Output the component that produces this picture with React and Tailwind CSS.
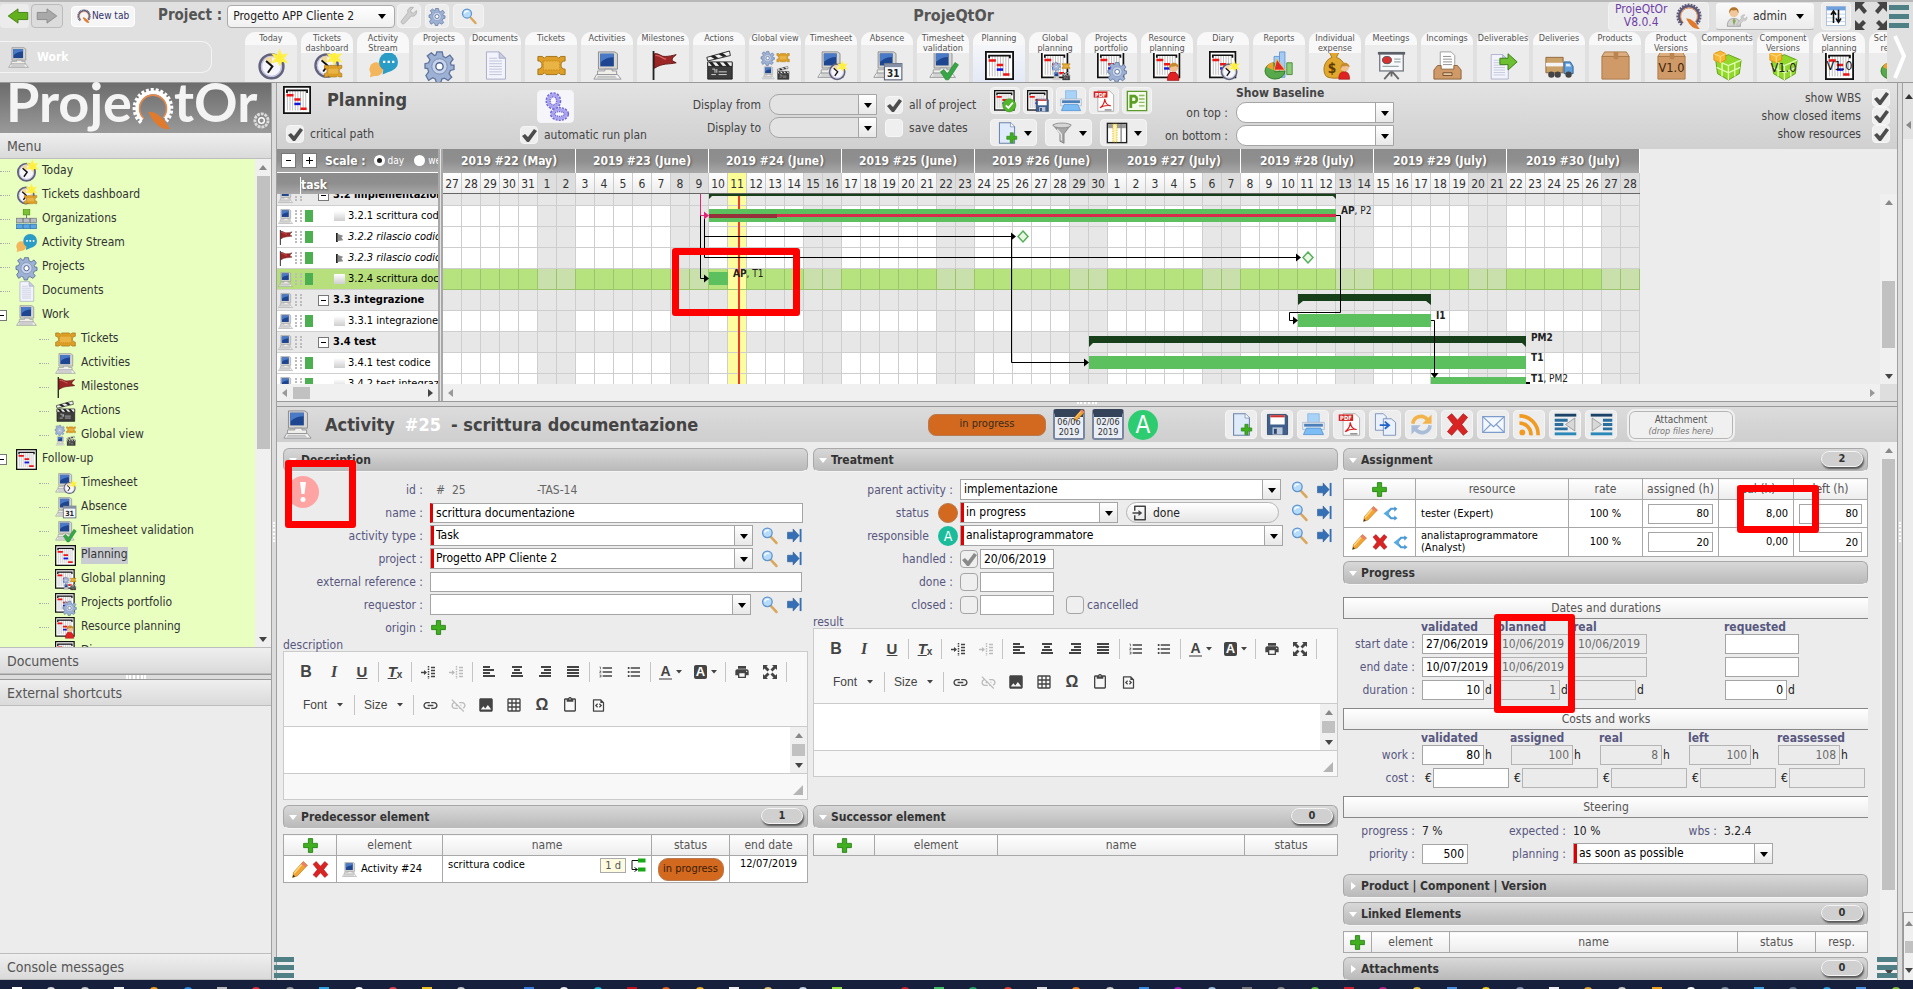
import React, { useId } from 'react';
import clsx from 'clsx';
import {
  MdFormatListBulleted,
  MdFormatListNumbered,
  MdGridOn,
  MdImage,
  MdLink,
  MdLinkOff,
  MdOutlineContentPaste,
  MdPrint,
} from 'react-icons/md';
import { RiFileCodeLine, RiLoginBoxLine } from 'react-icons/ri';

/* ---------- drawing parts, all on a 32 x 32 box ---------- */

const Part = ({ x = 0, y = 0, s = 1, children }) => (
  <g transform={`translate(${x} ${y}) scale(${s})`}>{children}</g>
);

const Pc = () => (
  <g>
    <path d="M6 1h18l3 2v17H6z" fill="#d8d6cf" stroke="#85878f" />
    <rect x="8" y="3" width="15" height="14" fill="#1d4590" />
    <path d="M8 3h15v4C17 7 12 9 8 13z" fill="#4a7ac6" />
    <path d="M13 20h8v2h5v4H5v-4h8z" fill="#efeee9" stroke="#94959a" />
    <path d="M4 26h23l4 5H1z" fill="#f6f6f4" stroke="#8f9197" />
    <path d="M5 28h20M4 29.500h22" stroke="#b5b5b5" />
  </g>
);

const Star = () => (
  <path
    d="M25 0l2 5 5-1-3 4 3 4-5-1-2 4-2-4-5 1 3-4-3-4 5 1z"
    fill="#ffee3c"
    stroke="#fff04a"
    strokeWidth="2"
  />
);

const Clock = ({ star = true }) => (
  <g>
    <circle cx="16" cy="17" r="13" fill="#f6f5fb" stroke="#62627c" strokeWidth="3" />
    <circle cx="16" cy="17" r="11" fill="none" stroke="#c3c3de" strokeWidth="1.500" />
    <path d="M16 17L9 9a10 10 0 0 1 8-3z" fill="#f3dc9a" />
    <path d="M10 11l7 6-5 7" fill="none" stroke="#111" strokeWidth="2.200" />
    {star && <Star />}
  </g>
);

const Ticket = () => (
  <g>
    <path
      d="M1 6h5l2 2 2-2h12l2 2 2-2h5v5a4 4 0 0 0 0 9v6h-5l-2-2-2 2H10l-2-2-2 2H1v-6a4 4 0 0 0 0-9z"
      fill="#dd9f27"
      stroke="#a06f14"
    />
    <path d="M7 11h18v10H7z" fill="#eab444" stroke="#c98a1a" strokeDasharray="2 1" />
  </g>
);

const Gear = () => (
  <g>
    <path
      d="M13 1h6l1 5 3 1.500 4.500-3L31 9l-3 4 .8 2.500H32v5l-4 1-1.500 3.500 3 4-4 3.500-4-2.500-3 1-1 4h-5l-1-4-3-1.500-4.500 3L1 27l3-4-1-3.500L0 19v-5l4-1 1.500-3.500-3-4L7 2l3.500 3L12 4.500z"
      fill="#9db1d4"
      stroke="#5d729c"
      strokeWidth="1.400"
    />
    <circle cx="16" cy="17" r="8.500" fill="#c6d3ea" stroke="#7488b0" />
    <circle cx="16" cy="17" r="4" fill="#fff" stroke="#4f648f" strokeWidth="1.500" />
  </g>
);

const Doc = () => (
  <g>
    <path d="M6 1h14l7 7v23H6z" fill="#f3f4fb" stroke="#a5a8c4" />
    <path d="M20 1v7h7z" fill="#c9cee2" stroke="#a5a8c4" />
    <path d="M9 8h9M9 11h14M9 14h14M9 17h14M9 20h14M9 23h14M9 26h14" stroke="#bcc1d8" />
  </g>
);

const Org = () => (
  <g>
    <path d="M16 9v5M5 21v-6h22v6M16 14v6" stroke="#777" fill="none" strokeWidth="1.500" />
    <rect x="11" y="1" width="10" height="8" fill="#7ac234" stroke="#4b8a15" />
    {[1, 11.5, 22].map((x) => (
      <g key={x}>
        <rect x={x} y="14" width="9" height="7" fill="#b9bcc4" stroke="#70737b" />
        <rect x={x} y="23" width="9" height="7" fill="#59a7e6" stroke="#2269a8" />
      </g>
    ))}
  </g>
);

const Bubbles = () => (
  <g>
    <circle cx="8" cy="20" r="7.500" fill="#f3b65c" />
    <path d="M2 24l-1 5 7-2z" fill="#f3b65c" />
    <circle cx="21.500" cy="12" r="10.500" fill="#2b9cc6" />
    <path d="M16 19l-1 7 9-4z" fill="#2b9cc6" />
    <path d="M15.500 12h2.500M20.500 12h2.500M25.500 12h2.500" stroke="#fff" strokeWidth="2.500" />
  </g>
);

const Flag = () => (
  <g>
    <path d="M5 0v32" stroke="#222" strokeWidth="2" />
    <path d="M6 3c5-1 8 4 12 3 4 0 8-1 12-2-4 3-5 5-4 7l4 2c-8 2-15 0-24 6z" fill="#9c2626" stroke="#5e0f0f" />
    <path d="M7 5c5-1 8 4 12 4" stroke="#d46060" strokeWidth="1.500" fill="none" />
  </g>
);

const Clap = () => (
  <g>
    <path d="M3 13h27v18H3z" fill="#3d3d3d" stroke="#1c1c1c" />
    <path d="M3 12h27v5H3z" fill="#f0f0f0" stroke="#222" />
    <path d="M4 12l4 5h4l-4-5zM12 12l4 5h4l-4-5zM20 12l4 5h4l-4-5z" fill="#222" />
    <path d="M2 7L27 0l1 5L3 11z" fill="#f0f0f0" stroke="#222" />
    <path d="M6 6l5 3 4-1-5-3.500zM15 3.500l5 3 4-1-5-3.500z" fill="#222" />
    <path d="M8 20h3v4M13 20v4M7 26h5M15 23h9M15 26h9" stroke="#ddd" fill="none" />
  </g>
);

const Global = () => (
  <g>
    <Part s={0.46}><Gear /></Part>
    <Part x={17} y={0} s={0.46}><Ticket /></Part>
    <Part x={1} y={17} s={0.44}><Pc /></Part>
    <Part x={17} y={17} s={0.46}><Clap /></Part>
  </g>
);

const Gantt = () => (
  <g>
    <rect x="1" y="1" width="30" height="30" fill="#fff" stroke="#111" strokeWidth="2" />
    <path d="M5 5v23M8 5v23M11 5v23M14 5v23M17 5v23M20 5v23M23 5v23M26 5v23" stroke="#b5b5b5" strokeWidth="1" />
    <path d="M4 5h24M4.500 4v4M27.500 4v4" stroke="#111" strokeWidth="2" />
    <path d="M4 10.500h8M13 15.500h7M20 26h7" stroke="#f01414" strokeWidth="2.800" />
    <path d="M13 20.500h7" stroke="#1414e0" strokeWidth="2.800" />
  </g>
);

const Person = () => (
  <g>
    <path d="M6 32c0-12 5-14 10-14s10 2 10 14z" fill="#e02222" stroke="#8c1010" />
    <circle cx="17" cy="10" r="7.500" fill="#f0c090" />
    <path d="M9 13c-2-14 16-15 17-3l-6-3c-4 2-6 1-7 1z" fill="#c48a2c" />
  </g>
);

const Check = () => (
  <path d="M1 17l6-4 6 8L26 1l6 4-17 26h-5z" fill="#35a845" stroke="#1f7a2d" />
);

const Cal31 = () => (
  <g>
    <rect x="1" y="3" width="30" height="28" fill="#f4f6fa" stroke="#606878" strokeWidth="2" />
    <rect x="1" y="3" width="30" height="6" fill="#8590a5" />
    <text x="16" y="26" textAnchor="middle" fontSize="17" fontWeight="700" fill="#222">31</text>
  </g>
);

const Chart = () => (
  <g>
    <path d="M10 6h6v24h-6zM16 1h6v28h-6z" fill="#a5cbf3" stroke="#6397d0" />
    <path d="M24 13h6v13h-6z" fill="#8ccc78" stroke="#4b8a35" />
    <path d="M10 13a11 9 0 1 0 12 9l-11 1z" fill="#58a84c" stroke="#2d7a1b" />
    <path d="M9 12v9L2 18c1-3 4-5 7-6z" fill="#f0a02c" />
    <path d="M13 9l9 12H10z" fill="#e02828" stroke="#f5c040" />
  </g>
);

const Money = () => (
  <g>
    <path d="M9 1h11l-3 6c9 3 12 13 9 20-2 4-19 4-21 0C1 20 4 10 12 7z" fill="#e0a82e" stroke="#a87410" />
    <text x="12" y="24" textAnchor="middle" fontSize="15" fontWeight="700" fill="#5c3b00">$</text>
    <Part x={16} y={12} s={0.6}><Person /></Part>
  </g>
);

const Board = () => (
  <g>
    <path d="M16 22l-8 9M16 22l8 9M16 20v8" stroke="#666" strokeWidth="2" />
    <rect x="3" y="2" width="26" height="20" fill="#f7f9fb" stroke="#787c84" strokeWidth="1.500" />
    <path d="M1 1h30v3H1z" fill="#5b5f67" />
    <ellipse cx="11" cy="10" rx="5" ry="4" fill="#d93030" stroke="#555" />
    <path d="M19 9h7M19 12h7M6 17h18" stroke="#9aa" strokeWidth="1.200" />
  </g>
);

const Inbox = () => (
  <g>
    <path d="M8 1h12l4 4v20H8z" fill="#fff" stroke="#999" />
    <path d="M11 6h9M11 9h10M11 12h10M11 15h10" stroke="#888" />
    <path d="M5 16h4v4h14v-4h4l4 5v10H1V21z" fill="#cf9a68" stroke="#8a5f36" />
    <path d="M11 24h10v3H11z" fill="#e6cba8" stroke="#704a28" />
  </g>
);

const Deliver = () => (
  <g>
    <Part x={-3} y={3} s={0.9}><Doc /></Part>
    <path d="M12 8h9V3l10 9-10 9v-6h-9z" fill="#6cc032" stroke="#35790f" />
  </g>
);

const Truck = () => (
  <g>
    <path d="M1 7h19v17H1z" fill="#c9a26a" stroke="#8d6239" />
    <path d="M1 13h19v4H1z" fill="#f4f4f4" />
    <path d="M21 12h7l3 5v8H21z" fill="#5f9ed6" stroke="#285f9a" />
    <path d="M23 14h4l2 3h-6z" fill="#dcecfb" />
    <circle cx="7" cy="26" r="3.500" fill="#444" />
    <circle cx="14" cy="26" r="3.500" fill="#444" />
    <circle cx="26" cy="26" r="3.500" fill="#444" />
  </g>
);

const Box = ({ label }) => (
  <g>
    <path d="M1 6h30v25H1z" fill="#cf9a68" stroke="#a87645" />
    <path d="M1 6l3-5h24l3 5z" fill="#dcae80" stroke="#a87645" />
    <path d="M14 1h5v8h-5z" fill="#b98450" />
    {label && <text x="16" y="23" textAnchor="middle" fontSize="14" fill="#402408">{label}</text>}
  </g>
);

const Cube = ({ label }) => (
  <g>
    <path d="M17 4l14 6-2 15-12 7L5 25 3 10z" fill="#92d82c" stroke="#5d9c14" />
    <path d="M3 10l14 6 14-6M17 16v16M10 13v15M24 13v15M4 18l13 6 13-6" fill="none" stroke="#e2ffb4" strokeWidth="1.500" />
    <path d="M1 3l7-3 6 3v7l-6 3-7-3z" fill="#f7b733" stroke="#d9940f" />
    <path d="M1 3l7 3 6-3M8 6v7" stroke="#ffe49c" fill="none" />
    {label && <text x="16" y="23" textAnchor="middle" fontSize="14" fill="#222">{label}</text>}
  </g>
);

const Disk = () => (
  <g>
    <path d="M2 2h26l2 2v26H2z" fill="#3f5f8c" stroke="#1e3557" />
    <path d="M6 3h20v13H6z" fill="#fff" />
    <path d="M6 3h20v3H6z" fill="#c33" />
    <path d="M9 20h14v10H9z" fill="#bcc8da" />
    <path d="M11 22h4v7h-4z" fill="#2a4670" />
  </g>
);

const Printer = () => (
  <g>
    <path d="M8 1h16v13H8z" fill="#a9d2f7" stroke="#7fb0de" />
    <path d="M1 13h30v10H1z" fill="#e8edf3" stroke="#a5b0c0" />
    <path d="M3 15h26v4H3z" fill="#4a7fba" />
    <path d="M6 21h20l4 9H2z" fill="#7dbdf5" stroke="#4a8acb" />
  </g>
);

const Pdf = () => (
  <g>
    <path d="M7 1h17l6 6v24H7z" fill="#fbfbfb" stroke="#999" />
    <rect x="1" y="2" width="20" height="9" fill="#d42020" />
    <text x="11" y="9.500" textAnchor="middle" fontSize="8" fontWeight="700" fill="#fff">PDF</text>
    <path d="M10 26c4-3 7-8 7-13 1 6 4 10 9 10-6-1-11 0-16 3z" fill="none" stroke="#d42020" strokeWidth="1.600" />
    <path d="M17 29h10" stroke="#888" strokeWidth="2" />
  </g>
);

const Project = () => (
  <g>
    <path d="M2 2h28v28H2z" fill="#f4faec" stroke="#5d9a2b" strokeWidth="2" />
    <path d="M19 8h8M19 13h8M19 18h8M19 23h8" stroke="#8dbb60" strokeWidth="2" />
    <path d="M7 26V9h6a5 5 0 0 1 0 9H7" fill="none" stroke="#5ba024" strokeWidth="4" />
  </g>
);

const Plus = () => (
  <path d="M12 3h8v9h9v8h-9v9h-8v-9H3v-8h9z" fill="#3fae1f" stroke="#1f7a0c" strokeWidth="1.500" />
);

const NewDoc = () => (
  <g>
    <path d="M5 1h16l6 6v24H5z" fill="#dfeafa" stroke="#6b84ab" strokeWidth="1.500" />
    <path d="M21 1v6h6" fill="#fff" stroke="#6b84ab" />
    <Part x={14} y={14} s={0.56}><Plus /></Part>
  </g>
);

const Funnel = () => (
  <g>
    <path d="M3 4h26L19 17v14l-6-3V17z" fill="#a8a8a8" stroke="#6e6e6e" />
    <ellipse cx="16" cy="5" rx="13" ry="3.500" fill="#d6d6d6" stroke="#777" />
    <path d="M9 11l6 7v9" stroke="#e8e8e8" strokeWidth="2" fill="none" />
  </g>
);

const Columns = () => (
  <g>
    <rect x="2" y="2" width="28" height="28" fill="#fff" stroke="#222" strokeWidth="2" />
    <path d="M3 3h26v6H3z" fill="#9b9b9b" />
    <rect x="10" y="3" width="6" height="26" fill="#fff3b0" stroke="#c9a400" strokeDasharray="2 1.500" />
    <path d="M22 3v26" stroke="#888" strokeWidth="2" />
  </g>
);

const Copy = () => (
  <g>
    <path d="M2 1h11l4 4v19H2z" fill="#eaf1fb" stroke="#5878a8" />
    <path d="M13 8h11l6 5v18H13z" fill="#eaf1fb" stroke="#5878a8" />
    <path d="M8 17h12m-5-5l6 5-6 5" stroke="#1f63c8" strokeWidth="2.500" fill="none" />
  </g>
);

const Refresh = () => (
  <g fill="none" strokeWidth="5">
    <path d="M4 15c1-10 13-14 20-6" stroke="#f2b44a" />
    <path d="M30 2v13H17z" fill="#f2b44a" />
    <path d="M28 17c-1 10-13 14-20 6" stroke="#a9bcd8" />
    <path d="M2 30V17h13z" fill="#a9bcd8" />
  </g>
);

const Cross = () => (
  <path d="M8 1l8 9 8-9 6 5-8 10 8 10-6 5-8-9-8 9-6-5 8-10L2 6z" fill="#d92424" stroke="#a81414" />
);

const Mail = () => (
  <g>
    <path d="M1 5h30v22H1z" fill="#f3f7fe" stroke="#7d9ccb" strokeWidth="1.500" />
    <path d="M1 5l15 14L31 5M1 27l11-11M31 27L20 16" fill="none" stroke="#7d9ccb" strokeWidth="1.500" />
  </g>
);

const Rss = () => (
  <g fill="none" stroke="#f09a22" strokeWidth="5">
    <path d="M2 4a26 26 0 0 1 26 27M2 14a16 16 0 0 1 16 17" />
    <circle cx="6" cy="27" r="4" fill="#f09a22" stroke="none" />
  </g>
);

const Indent = ({ right }) => (
  <g>
    <path d="M1 1h30v4H1z" fill="#1c4468" />
    <path d="M1 27h30v4H1z" fill="#2a88b8" />
    <path d={right ? 'M18 8h13v4H18zM18 14h13v4H18zM18 20h13v4H18z' : 'M1 8h18v4H1zM1 14h12v4H1zM1 20h18v4H1z'} fill="#2a6f9e" />
    <path d={right ? 'M3 7l13 9-13 9z' : 'M29 7l-13 9 13 9z'} fill="#d8d8d8" stroke="#8a8a8a" />
  </g>
);

const Pencil = () => (
  <g>
    <path d="M23 1l8 7L12 28l-9 3 2-10z" fill="#f4a530" stroke="#b06a0c" />
    <path d="M23 1l8 7-4 4-8-7z" fill="#e9806a" />
    <path d="M20 7L6 23" stroke="#ffd98c" strokeWidth="2.500" />
    <path d="M3 31l1-5 4 3z" fill="#333" />
  </g>
);

const Share = () => (
  <g fill="none" stroke="#4b9ad6" strokeWidth="4.500">
    <path d="M27 6H17L8 16l9 10h10" />
    <path d="M13 7L1 16l12 9z" fill="#5aaae4" stroke="none" />
    <path d="M24 1l7 5-7 6zM24 20l7 6-7 5z" fill="#4b9ad6" stroke="none" />
  </g>
);

const Lens = () => (
  <g>
    <path d="M19 19l10 11" stroke="#d9a85c" strokeWidth="5" strokeLinecap="round" />
    <circle cx="12" cy="11" r="9" fill="#b7dcfa" stroke="#5e94cf" strokeWidth="2.500" />
    <path d="M7 11c0-4 5-6 8-4" stroke="#fff" strokeWidth="2.500" fill="none" />
  </g>
);

const GoTo = () => (
  <g>
    <path d="M1 9h12V2l13 14-13 14v-7H1z" fill="#3570b6" stroke="#1d4c88" />
    <path d="M29 2v28" stroke="#3570b6" strokeWidth="4" />
  </g>
);

const Wrench = () => (
  <path d="M29 6l-5 5-4-1-1-4 5-5c-6-2-12 3-10 9L3 24c-3 4 2 8 5 5l12-13c6 2 11-4 9-10z" fill="#cfcfcf" stroke="#999" />
);

const Chain = () => (
  <g fill="none" stroke="#6f66d8">
    <ellipse cx="13" cy="9" rx="6" ry="7" strokeWidth="6" strokeDasharray="2 1" />
    <ellipse cx="20" cy="24" rx="8" ry="5" strokeWidth="6" strokeDasharray="2 1" />
    <ellipse cx="13" cy="9" rx="6" ry="7" stroke="#aaa5ec" strokeWidth="3" />
    <ellipse cx="20" cy="24" rx="8" ry="5" stroke="#aaa5ec" strokeWidth="3" />
  </g>
);

// toothed ring, open at the bottom where the tail leaves it
const QLogo = ({ light }) => (
  <g fill="none">
    <path d="M7 27A14 14 0 1 1 26 26" stroke={light ? '#fff' : '#5c5878'} strokeWidth="3" strokeDasharray="2.200 1.400" />
    <path d="M8 25A12 12 0 1 1 25 24" stroke={light ? '#fff' : '#5c5878'} strokeWidth="3" />
    <path d="M9 24A10.300 10.300 0 1 1 24 23" stroke="#e58a4c" strokeWidth="1.200" />
    <path d="M14 20c5 0 7 4 9 5s2 4 4 6c-5 0-9-3-13-11z" fill="#e07b2e" stroke="#e07b2e" strokeWidth="2" />
  </g>
);

const Admin = () => (
  <g>
    <path d="M2 31c0-9 4-12 10-12s10 3 10 12z" fill="#d5d5d5" stroke="#888" />
    <path d="M12 19l-2 3 2 8 3-8z" fill="#8a5" />
    <circle cx="12" cy="10" r="7" fill="#f0c79a" />
    <path d="M5 11C3-1 21-1 19 11l-3-5c-3 1-7 1-8 0z" fill="#b5742e" />
    <Part x={15} y={13} s={0.58}><Wrench /></Part>
  </g>
);

const Switch = () => (
  <g>
    <rect x="1" y="1" width="30" height="30" fill="#fff" stroke="#8aa6cc" />
    <path d="M1 1h30v6H1z" fill="#6fa1de" />
    <path d="M1 13h30M1 19h30M1 25h30" stroke="#9dbbe0" />
    <path d="M12 27V8m-4 6l4-6 4 6M20 6v20m-4-6l4 6 4-6" stroke="#111" strokeWidth="2.500" fill="none" />
  </g>
);

const Pred = () => (
  <g>
    <path d="M16 3h15v8H16zM16 21h15v8H16z" fill="#18a818" />
    <path d="M16 7H4v18h10m-5-4l6 4-6 4" fill="none" stroke="#111" strokeWidth="2" />
  </g>
);

const over = (Base, Top) => () => (
  <g>
    <Part s={0.94}><Base /></Part>
    <Part x={12} y={12} s={0.64}><Top /></Part>
  </g>
);

const OkDot = () => (
  <g>
    <circle cx="16" cy="16" r="15" fill="#52b52b" stroke="#2d7d10" />
    <path d="M8 16l6 6 10-12" stroke="#fff" strokeWidth="4" fill="none" />
  </g>
);

const VersionGantt = () => (
  <g>
    <Gantt />
    <text x="16" y="21" textAnchor="middle" fontSize="14" fill="#111">V1.0</text>
  </g>
);

const icons = {
  today: Clock,
  dashboard: over(Clock, Ticket),
  stream: Bubbles,
  org: Org,
  gear: Gear,
  doc: Doc,
  ticket: Ticket,
  pc: Pc,
  flag: Flag,
  clap: Clap,
  global: Global,
  timesheet: over(Pc, Clock),
  absence: over(Pc, Cal31),
  validation: over(Pc, Check),
  gantt: Gantt,
  globalPlanning: over(Gantt, Global),
  portfolio: over(Gantt, Gear),
  resource: over(Gantt, Person),
  diary: over(Gantt, Clock),
  chart: Chart,
  money: Money,
  board: Board,
  inbox: Inbox,
  deliver: Deliver,
  truck: Truck,
  box: Box,
  boxV: () => <Box label="V1.0" />,
  cube: Cube,
  cubeV: () => <Cube label="V1.0" />,
  versionGantt: VersionGantt,
  ganttOk: over(Gantt, OkDot),
  ganttSave: over(Gantt, Disk),
  disk: Disk,
  printer: Printer,
  pdf: Pdf,
  msProject: Project,
  newDoc: NewDoc,
  funnel: Funnel,
  columns: Columns,
  copy: Copy,
  refresh: Refresh,
  cross: Cross,
  mail: Mail,
  rss: Rss,
  outdent: Indent,
  indent: () => <Indent right />,
  pencil: Pencil,
  share: Share,
  plus: Plus,
  lens: Lens,
  goto: GoTo,
  wrench: Wrench,
  chain: Chain,
  q: QLogo,
  qLight: () => <QLogo light />,
  admin: Admin,
  switch: Switch,
  pred: Pred,
};

function Icon({ name, className = 'size-5' }) {
  const Drawing = icons[name];
  return (
    <svg viewBox="0 0 32 32" className={clsx('shrink-0 overflow-visible', className)} aria-hidden="true">
      <Drawing />
    </svg>
  );
}

function Tri({ dir = 'down', className = 'text-black' }) {
  const d = {
    down: 'M0 2h8L4 7z',
    up: 'M0 6h8L4 1z',
    left: 'M6 0v8L1 4z',
    right: 'M2 0v8l5-4z',
  }[dir];
  return (
    <svg viewBox="0 0 8 8" className={clsx('size-2 shrink-0', className)} aria-hidden="true">
      <path d={d} fill="currentColor" />
    </svg>
  );
}

/* ---------- form controls ---------- */

function Combo({ id, label, value = '', required, rounded, muted, className }) {
  return (
    <span
      className={clsx(
        'flex h-[21px] min-w-0 overflow-hidden border border-[#a5a5a5]',
        rounded && 'rounded-l-[10px]',
        muted ? 'bg-[#e3e3e3]' : 'bg-white',
        className
      )}
    >
      {required && <span className="w-[3px] shrink-0 bg-[#e00000]" />}
      <select
        id={id}
        aria-label={label}
        defaultValue={value}
        className={clsx('min-w-0 flex-1 appearance-none truncate bg-transparent text-xs leading-[19px] text-black outline-none', required ? 'px-0.5' : 'px-[3px]')}
      >
        <option>{value}</option>
      </select>
      <span className="flex w-[18px] shrink-0 items-center justify-center border-l border-[#a5a5a5] bg-linear-to-b from-white to-[#e8e8e8]">
        <Tri />
      </span>
    </span>
  );
}

function Tick({ id, label, checked, gray, bordered }) {
  return (
    <span className="relative flex size-[18px] shrink-0">
      <input
        id={id}
        type="checkbox"
        aria-label={label}
        defaultChecked={checked}
        className={clsx(
          'peer size-[18px] appearance-none rounded-[4px] border bg-[#efefef]',
          bordered ? 'border-[#a5a5a5]' : 'border-[#f6f6f6]'
        )}
      />
      <svg
        viewBox="0 0 18 18"
        className={clsx(
          'pointer-events-none absolute inset-0 hidden peer-checked:block',
          gray ? 'text-[#8a8a8a]' : 'text-[#4c4c4c]'
        )}
      >
        <path d="M2 10l3-2 3 3 6-8 3 2-8 11H7z" fill="currentColor" />
      </svg>
    </span>
  );
}

function Input({ id, label, value = '', readOnly, required, right, className }) {
  return (
    <input
      id={id}
      aria-label={label}
      defaultValue={value}
      readOnly={readOnly}
      className={clsx(
        'h-5 min-w-0 border text-xs outline-none',
        required ? 'border-l-[3px] border-l-[#e00000] px-[3px]' : 'px-[3px]',
        right && 'text-right',
        readOnly ? 'border-[#b4b4b4] bg-[#ebebeb] text-[#6b6b6b]' : 'border-[#a5a5a5] bg-white text-black',
        className
      )}
    />
  );
}

function ToolButton({ icon, title, wide, className = 'h-[27px] w-[30px]', size = 'size-[22px]' }) {
  return (
    <button
      type="button"
      title={title}
      className={clsx(
        'flex shrink-0 items-center justify-center rounded-[4px] border border-[#f4f4f4] bg-[#ededed]',
        className
      )}
    >
      <Icon name={icon} className={size} />
      {wide && <Tri className="ml-1.5 text-black" />}
    </button>
  );
}

/* ---------- top of the page ---------- */

const Bars = () => (
  <>
    <span className="h-[5px] w-5 bg-[#4f8085]" />
    <span className="h-[5px] w-5 bg-[#4f8085]" />
    <span className="h-[5px] w-5 bg-[#4f8085]" />
  </>
);

function TopBar() {
  const id = useId();
  return (
    <header className="flex h-8 shrink-0 items-center border-t-2 border-[#b8b8b8] bg-[#e0e0e0] pb-0.5">
      <button type="button" title="Back" className="flex h-6 w-[29px] items-center justify-center rounded-[4px] bg-[#ececec] pl-1.5">
        <svg viewBox="0 0 24 18" className="h-[16px] w-[22px]">
          <path d="M1 9L12 1v4h11v8H12v4z" fill="#62b01e" stroke="#3f7d0c" />
        </svg>
      </button>
      <button type="button" title="Forward" className="ml-0.5 flex h-6 w-8 items-center justify-center rounded-[4px] border border-[#bbb] bg-[#dcdcdc]">
        <svg viewBox="0 0 24 18" className="h-[16px] w-[22px]">
          <path d="M23 9L12 1v4H1v8h11v4z" fill="#a9a9a9" stroke="#888" />
        </svg>
      </button>
      <button type="button" className="ml-2 flex h-[21px] w-[64px] items-center justify-center gap-px rounded-[4px] border border-white bg-[#f6f6f6] text-[10px] whitespace-nowrap text-[#33336c]">
        <Icon name="q" className="size-[14px]" />
        New tab
      </button>
      <label htmlFor={id} className="ml-[23px] text-[15px] font-bold text-[#555]">
        Project :
      </label>
      <span className="ml-[5px] flex h-[23px] w-[168px] items-center rounded-[4px] border border-[#aaa] bg-linear-to-b from-white to-[#f0f0f0] pr-2">
        <select id={id} className="flex-1 appearance-none bg-transparent px-[5px] text-xs text-[#222] outline-none">
          <option>Progetto APP Cliente 2</option>
        </select>
        <Tri />
      </span>
      <ToolButton icon="wrench" title="Parameters" className="ml-0.5 h-6 w-6" size="size-[18px]" />
      <ToolButton icon="gear" title="Project settings" className="ml-1 h-6 w-6" size="size-[16px]" />
      <ToolButton icon="lens" title="Search" className="ml-1 h-6 w-[31px]" size="size-[16px]" />
      <h1 className="flex-1 pr-[187px] text-right text-base leading-5 font-bold text-[#555] min-[1500px]:pr-0 min-[1500px]:pl-[429px] min-[1500px]:text-left">
        ProjeQtOr
      </h1>
      <div className="flex h-[29px] w-[101px] items-center justify-between rounded-[4px] border border-[#f2f2f2] bg-[#ececec] px-1.5 text-center text-xs leading-[13px] text-[#6f3fa8]">
        <a href="#version">
          ProjeQtOr
          <br />
          V8.0.4
        </a>
        <Icon name="q" className="size-[26px]" />
      </div>
      <button type="button" className="ml-1.5 flex h-7 w-[100px] items-center rounded-[4px] border border-b-[#b5b5b5] border-[#e0e0e0] bg-linear-to-b from-[#fafafa] to-[#ececec] px-2.5 text-xs text-[#333]">
        <Icon name="admin" className="mr-1.5 size-[21px]" />
        admin
        <Tri className="ml-auto text-black" />
      </button>
      <ToolButton icon="switch" title="Switch layout" className="ml-1.5 h-[28px] w-[30px]" size="size-[20px]" />
      <button type="button" title="Full screen" className="ml-1 flex">
        <svg viewBox="0 0 32 28" className="h-7 w-8 text-[#444]">
          <path
            d="M0 0h10L7 3l5 6-3 3-5-6-4 4zM32 0H22l3 3-5 6 3 3 5-6 4 4zM0 28h10l-3-3 4-4-3-3-4 4-4-4zM32 28H22l3-3-4-4 3-3 4 4 4-4z"
            fill="currentColor"
          />
        </svg>
      </button>
      <button type="button" title="Menu" className="mr-1 ml-0.5 flex flex-col gap-1">
        <Bars />
      </button>
    </header>
  );
}

const shortcuts = [
  ['Today', 'today'],
  ['Tickets dashboard', 'dashboard'],
  ['Activity Stream', 'stream'],
  ['Projects', 'gear'],
  ['Documents', 'doc'],
  ['Tickets', 'ticket'],
  ['Activities', 'pc'],
  ['Milestones', 'flag'],
  ['Actions', 'clap'],
  ['Global view', 'global'],
  ['Timesheet', 'timesheet'],
  ['Absence', 'absence'],
  ['Timesheet validation', 'validation'],
  ['Planning', 'gantt'],
  ['Global planning', 'globalPlanning'],
  ['Projects portfolio', 'portfolio'],
  ['Resource planning', 'resource'],
  ['Diary', 'diary'],
  ['Reports', 'chart'],
  ['Individual expense', 'money'],
  ['Meetings', 'board'],
  ['Incomings', 'inbox'],
  ['Deliverables', 'deliver'],
  ['Deliveries', 'truck'],
  ['Products', 'box'],
  ['Product Versions', 'boxV'],
  ['Components', 'cube'],
  ['Component Versions', 'cubeV'],
  ['Versions planning', 'versionGantt'],
  ['Scheduled reports', 'chart'],
];

function ShortcutBar() {
  return (
    <nav className="flex h-[51px] shrink-0 border-b border-[#999] bg-[#e0e0e0]">
      <div className="w-[245px] shrink-0 pt-[9px]">
        <div className="flex h-8 w-[212px] items-center gap-2 rounded-r-[10px] border border-l-0 border-[#f4f4f4] pl-2 text-xs font-bold text-white">
          <Icon name="pc" className="size-[21px]" />
          Work
        </div>
      </div>
      <div className="flex min-w-0 flex-1 gap-1 overflow-hidden">
        {shortcuts.map(([label, icon]) => {
          const words = label === 'Global view' ? [label] : label.split(' ');
          return (
            <a
              key={label}
              href={`#${icon}`}
              className={clsx(
                'flex h-[50px] w-[52px] shrink-0 flex-col items-center justify-between rounded-t-[10px] pb-0.5 text-center text-[9px] leading-[10px] text-[#555]',
                label === 'Planning' ? 'bg-linear-to-b from-[#fafafa] to-[#e4e9f6]' : 'bg-[#ececec]'
              )}
            >
              <span
                className={clsx(
                  'relative z-10 w-full shrink-0 rounded-t-[10px] bg-[#f8f8f8] pt-px whitespace-nowrap',
                  words.length > 1 ? 'h-[21px]' : 'h-[13px]'
                )}
              >
                {words.map((w) => (
                  <span key={w} className="block">
                    {w}
                  </span>
                ))}
              </span>
              <Icon name={icon} className="-mt-3 size-[29px]" />
            </a>
          );
        })}
      </div>
      <button type="button" title="Scroll right" className="flex w-[26px] shrink-0 items-center justify-center">
        <svg viewBox="0 0 14 44" className="h-11 w-3.5">
          <path d="M2 1l9 20-9 22" stroke="#fff" strokeWidth="4" fill="none" />
        </svg>
      </button>
    </nav>
  );
}

/* ---------- left column ---------- */

const menu = [
  ['Today', 'today', 1],
  ['Tickets dashboard', 'dashboard', 1],
  ['Organizations', 'org', 1],
  ['Activity Stream', 'stream', 1],
  ['Projects', 'gear', 1],
  ['Documents', 'doc', 1],
  ['Work', 'pc', 1, true],
  ['Tickets', 'ticket', 2],
  ['Activities', 'pc', 2],
  ['Milestones', 'flag', 2],
  ['Actions', 'clap', 2],
  ['Global view', 'global', 2],
  ['Follow-up', 'gantt', 1, true],
  ['Timesheet', 'timesheet', 2],
  ['Absence', 'absence', 2],
  ['Timesheet validation', 'validation', 2],
  ['Planning', 'gantt', 2],
  ['Global planning', 'globalPlanning', 2],
  ['Projects portfolio', 'portfolio', 2],
  ['Resource planning', 'resource', 2],
  ['Diary', 'diary', 2],
];

const PaneTitle = ({ children }) => (
  <h2 className="flex h-[26px] shrink-0 items-center border-b border-[#bdbdbd] bg-linear-to-b from-[#efefef] to-[#dadada] pl-[7px] text-sm text-[#555]">
    {children}
  </h2>
);

function Minus({ plus, className }) {
  return (
    <button
      type="button"
      title={plus ? 'Expand' : 'Collapse'}
      className={clsx('flex size-[11px] shrink-0 items-center justify-center border border-[#777] bg-white', className)}
    >
      <svg viewBox="0 0 7 7" className="size-[7px]">
        <path d={plus ? 'M0 3.500h7M3.500 0v7' : 'M1 3.500h5'} stroke="#000" />
      </svg>
    </button>
  );
}

function SideBar() {
  return (
    <aside className="flex w-[271px] shrink-0 flex-col bg-[#ececec]">
      <div className="flex h-[50px] shrink-0 items-center bg-linear-to-b from-[#6c6c6c] to-[#9a9a9a] pl-[6px] font-['Lato'] text-[54px] leading-[50px] font-bold text-[#f4f4f4]">
        <span className="-mt-3">Proje</span>
        <Icon name="qLight" className="size-[42px]" />
        <span className="-mt-3">tOr</span>
        <svg viewBox="0 0 18 18" className="mt-6 -ml-1 size-[17px] shrink-0">
          <circle cx="9" cy="9" r="7" fill="none" stroke="#ddd" strokeWidth="3" strokeDasharray="3 1" />
          <circle cx="9" cy="9" r="3" fill="none" stroke="#fff" strokeWidth="1.500" />
        </svg>
      </div>
      <PaneTitle>Menu</PaneTitle>
      <div className="flex h-[489px] shrink-0 overflow-hidden border-b border-[#bdbdbd] bg-[#e8ffc0]">
        <ul className="min-w-0 flex-1">
          {menu.map(([label, icon, level, open], i) => (
            <li key={label + i} className={clsx('flex h-6 items-center text-xs text-[#333]', level === 2 && 'pl-[39px]')}>
              <span className="flex w-4 shrink-0 items-center">
                {open ? <Minus className="-ml-1" /> : <span className="w-2.5 border-t border-dotted border-[#aaa]" />}
              </span>
              <Icon name={icon} className="size-[21px]" />
              <a href={`#menu-${i}`} className={clsx('ml-[5px] pb-0.5 leading-[15px] whitespace-nowrap', label === 'Planning' && 'bg-[#c9cdd2]')}>
                {label}
              </a>
            </li>
          ))}
        </ul>
        <VScroll thumb="h-[273px]" className="w-4" />
      </div>
      <PaneTitle>Documents</PaneTitle>
      <div className="flex h-1.5 shrink-0 justify-center border-y border-[#999] bg-[#dcdcdc]">
        <span className="w-5 border-y-2 border-dotted border-white" />
      </div>
      <PaneTitle>External shortcuts</PaneTitle>
      <div className="flex-1 border-b border-[#bdbdbd]" />
      <PaneTitle>Console messages</PaneTitle>
    </aside>
  );
}

function VScroll({ lead, thumb, className = 'w-[17px]' }) {
  return (
    <div className={clsx('flex shrink-0 flex-col items-center bg-[#f0f0f0]', className)}>
      <span className="flex h-[17px] items-center">
        <Tri dir="up" className="text-[#888]" />
      </span>
      {lead && <span className={clsx('shrink-0', lead)} />}
      <span className={clsx('w-[13px] shrink-0 bg-[#c1c1c1]', thumb)} />
      <span className="mt-auto flex h-[17px] items-center">
        <Tri className="text-[#444]" />
      </span>
    </div>
  );
}

/* ---------- planning ---------- */

function Labelled({ label, checked, reverse, className }) {
  const id = useId();
  return (
    <span className={clsx('flex items-center text-xs text-[#444]', reverse ? 'flex-row-reverse gap-[11px]' : 'gap-1.5', className)}>
      <Tick id={id} checked={checked} />
      <label htmlFor={id} className="whitespace-nowrap">
        {label}
      </label>
    </span>
  );
}

function PlanningHeader() {
  const id = useId();
  return (
    <div className="flex h-[66px] shrink-0 bg-linear-to-b from-[#e2e2e2] to-[#d0d0d0] pl-1.5">
      <div className="flex w-[237px] shrink-0 flex-col justify-between pt-[3px] pb-1.5">
        <div className="flex items-center">
          <Icon name="gantt" className="size-[28px]" />
          <h2 className="ml-4 text-lg font-bold text-[#444]">Planning</h2>
        </div>
        <Labelled label="critical path" checked className="pl-[3px]" />
      </div>
      <div className="flex w-[143px] shrink-0 flex-col justify-between pt-[7px] pb-[5px]">
        <ToolButton icon="chain" title="Recalculate" className="ml-[17px] h-[33px] w-[37px] bg-[#f6f6fa]!" size="size-[28px]" />
        <Labelled label="automatic run plan" checked />
      </div>
      <div className="grid w-[327px] shrink-0 grid-cols-[98px_108px_1fr] content-start items-center gap-x-2 gap-y-0.5 pt-[11px]">
        <label htmlFor={`${id}a`} className="text-right text-xs text-[#444]">
          Display from
        </label>
        <Combo id={`${id}a`} rounded muted />
        <Labelled label="all of project" checked />
        <label htmlFor={`${id}b`} className="text-right text-xs text-[#444]">
          Display to
        </label>
        <Combo id={`${id}b`} rounded muted />
        <Labelled label="save dates" />
      </div>
      <div className="flex w-[172px] shrink-0 flex-col gap-[5px] pt-1">
        <div className="flex gap-[3px]">
          <ToolButton icon="ganttOk" title="Validate planning" />
          <ToolButton icon="ganttSave" title="Save baseline" />
          <ToolButton icon="printer" title="Print" />
          <ToolButton icon="pdf" title="Export to PDF" />
          <ToolButton icon="msProject" title="Export to project" />
        </div>
        <div className="flex gap-2">
          <ToolButton icon="newDoc" title="New" wide className="h-[27px] w-[47px]" />
          <ToolButton icon="funnel" title="Filter" wide className="h-[27px] w-[47px]" />
          <ToolButton icon="columns" title="Columns" wide className="h-[27px] w-[47px]" />
        </div>
      </div>
      <div className="grid shrink-0 grid-cols-[66px_158px] content-start items-center gap-x-2 gap-y-0.5 pt-0.5 text-right text-xs text-[#444]">
        <span className="col-start-2 h-[15px] text-left font-bold">Show Baseline</span>
        <label htmlFor={`${id}c`}>on top :</label>
        <Combo id={`${id}c`} rounded />
        <label htmlFor={`${id}d`}>on bottom :</label>
        <Combo id={`${id}d`} rounded />
      </div>
      <div className="ml-auto flex flex-col items-end pt-1.5 pr-[7px]">
        <Labelled label="show WBS" checked reverse />
        <Labelled label="show closed items" checked reverse />
        <Labelled label="show resources" checked reverse />
      </div>
    </div>
  );
}

const tasks = [
  { name: '3.2 implementazione', group: true, icon: 'pc' },
  { name: '3.2.1 scrittura codice', icon: 'pc' },
  { name: '3.2.2 rilascio codice', icon: 'flag', milestone: true },
  { name: '3.2.3 rilascio codice', icon: 'flag', milestone: true },
  { name: '3.2.4 scrittura documentazione', icon: 'pc', selected: true },
  { name: '3.3 integrazione', group: true, icon: 'pc' },
  { name: '3.3.1 integrazione', icon: 'pc' },
  { name: '3.4 test', group: true, icon: 'pc' },
  { name: '3.4.1 test codice', icon: 'pc' },
  { name: '3.4.2 test integrazione', icon: 'pc' },
];

const weeks = [
  '2019 #22 (May)',
  '2019 #23 (June)',
  '2019 #24 (June)',
  '2019 #25 (June)',
  '2019 #26 (June)',
  '2019 #27 (July)',
  '2019 #28 (July)',
  '2019 #29 (July)',
  '2019 #30 (July)',
];

// 27 may -> 28 july
const days = Array.from({ length: 63 }, (_, i) => new Date(2019, 4, 27 + i).getDate());
const isWeekend = (i) => i % 7 > 4;
const TODAY = 15;

const headGradient = 'bg-linear-to-b from-[#8c8c8c] via-[#8f8f8f] to-[#a8a8a8]';
const shadowText = '[text-shadow:1px_1px_2px_#555]';

function TaskList() {
  return (
    <div className="flex w-[161px] shrink-0 flex-col overflow-hidden">
      <div className={clsx('flex h-6 shrink-0 items-center border-b border-white pl-1 text-xs text-white', headGradient)}>
        <Minus className="size-[15px]!" />
        <Minus plus className="ml-1.5 size-[15px]!" />
        <span className={clsx('mr-2 ml-2 font-bold whitespace-nowrap', shadowText)}>Scale :</span>
        <label className="flex items-center gap-[3px] text-[10px]">
          <input type="radio" name="scale" defaultChecked className="size-[11px] appearance-none rounded-full border-[3px] border-white bg-[#222]" />
          day
        </label>
        <label className="ml-2.5 flex items-center gap-[3px] text-[10px]">
          <input type="radio" name="scale" className="size-[11px] appearance-none rounded-full bg-white" />
          week
        </label>
      </div>
      <div className={clsx('flex h-[21px] shrink-0 items-end text-xs leading-[17px] font-bold text-white', headGradient)}>
        <span className={clsx('ml-[23px] border-l border-white', shadowText)}>task</span>
      </div>
      <div className="h-[190px] shrink-0 overflow-hidden">
        <ul className="-mt-[9px]">
          {tasks.map((t) => (
            <li
              key={t.name}
              className={clsx(
                'flex h-[21px] items-center overflow-hidden border-b border-[#d0d0d0] pl-px text-[11px] whitespace-nowrap text-black',
                t.selected ? 'bg-[#b7e07c]' : t.group ? 'bg-[#e9e9e9]' : 'bg-white'
              )}
            >
              <Icon name={t.icon} className="size-[15px]" />
              <span className="ml-0.5 h-3 w-[7px] shrink-0 border-x-2 border-dotted border-[#bbb]" />
              {t.group ? (
                <Minus className="mr-1 ml-[16px]" />
              ) : (
                <>
                  <span className="ml-[3px] h-3 w-2 shrink-0 bg-[#4caf50]" />
                  {t.milestone ? (
                    <svg viewBox="0 0 10 10" className="mr-[3px] ml-[23px] size-[9px] shrink-0">
                      <path d="M1 0v10" stroke="#222" strokeWidth="2" />
                      <path d="M2 1l6 2-2 2 2 3-6 1z" fill="#888" />
                    </svg>
                  ) : (
                    <span className="mr-[3px] ml-[21px] h-2.5 w-[11px] shrink-0 bg-linear-to-b from-white to-[#cfcfcf]" />
                  )}
                </>
              )}
              <span className={clsx(t.group && 'font-bold', t.milestone && 'italic')}>{t.name}</span>
            </li>
          ))}
        </ul>
      </div>
      <div className="flex flex-1 items-center bg-[#f0f0f0] px-1">
        <Tri dir="left" className="text-[#999]" />
        <span className="ml-1 h-3 w-[17px] bg-[#c1c1c1]" />
        <Tri dir="right" className="ml-auto text-[#444]" />
      </div>
    </div>
  );
}

const barLabels = [
  { x: 898, y: 11, bold: 'AP', rest: ', P2' },
  { x: 290, y: 74, bold: 'AP', rest: ', T1' },
  { x: 993, y: 116, bold: 'I1' },
  { x: 1088, y: 138, bold: 'PM2' },
  { x: 1088, y: 158, bold: 'T1' },
  { x: 1088, y: 179, bold: 'T1', rest: ', PM2' },
];

function Bars1197() {
  return (
    <svg viewBox="0 0 1197 190" className="absolute top-0 left-0 h-[190px] w-[1197px]" aria-hidden="true">
      <path d="M296 0v190" stroke="#f23a28" strokeWidth="2" />
      {/* summaries */}
      <g fill="#173f19">
        <path d="M266 0h627v5l-3-3H269l-3 3z" />
        <path d="M855 100h133v11l-5-4H860l-5 4z" />
        <path d="M646 142h437v11l-4-4H650l-4 4z" />
      </g>
      {/* tasks */}
      <g fill="#5dc05f">
        <path d="M266 15h627v13H266z" />
        <path d="M266 78h19v13h-19z" />
        <path d="M855 120h133v13H855z" />
        <path d="M646 162h437v13H646z" />
        <path d="M988 183h95v10h-95z" />
      </g>
      <path d="M266 20h627v3H266z" fill="#d92c4c" />
      <path d="M266 20h68v4h-68z" fill="#98303c" />
      <g fill="#e9f6e4" stroke="#56b05a" strokeWidth="1.500">
        <path d="M580 37l5 5.500-5 5.500-5-5.500z" />
        <path d="M865 58l5 5.500-5 5.500-5-5.500z" />
      </g>
      {/* links */}
      <g fill="none" stroke="#000">
        <path d="M257.500 21v63.500h5M261.500 21v42.500h592M261.500 42.500h307M568.500 42v126.500h73M893 21.500h4.500v97h-51v8h5M988 126.500h3.500v55" />
      </g>
      <path d="M257.500 0v21.500h5" stroke="#e0257a" fill="none" />
      <path d="M261 17.500l5 4-5 4z" fill="#e0257a" />
      <path d="M261 80.500l5 4-5 4zM568 38.500l5 4-5 4zM853 59.500l5 4-5 4zM641 164.500l5 4-5 4zM850 122.500l5 4-5 4zM987.500 179h8l-4 5zM1083 188h4v2h-4z" />
    </svg>
  );
}

function GanttChart() {
  return (
    <div className="flex min-w-0 flex-1 flex-col overflow-hidden">
      <div className="flex h-[235px] shrink-0">
        <div className="min-w-0 flex-1 overflow-hidden">
          <div className="w-[1197px]">
            <div className="grid h-6 grid-cols-9">
              {weeks.map((w) => (
                <div key={w} className={clsx('flex items-center justify-center border-r border-white text-xs font-bold text-white', headGradient, shadowText)}>
                  {w}
                </div>
              ))}
            </div>
            <div className="flex h-[21px] border-b border-[#666]">
              {days.map((d, i) => (
                <div
                  key={i}
                  className={clsx(
                    'flex w-[19px] shrink-0 items-center justify-center border-r border-[#ccc] pt-px text-xs text-[#333]',
                    i === TODAY ? 'bg-[#fdfd96]' : isWeekend(i) ? 'bg-[#dedede]' : 'bg-linear-to-b from-white to-[#ececec]'
                  )}
                >
                  {d}
                </div>
              ))}
            </div>
            <div className="relative h-[190px] overflow-hidden">
              <div className="-mt-[9px]">
                {tasks.map((t) => (
                  <div key={t.name} className="flex h-[21px]">
                    {days.map((d, i) => (
                      <span
                        key={i}
                        className={clsx(
                          'w-[19px] shrink-0 border-r border-b',
                          t.selected ? 'border-[#9cc46c]' : 'border-[#cecece]',
                          i === TODAY
                            ? 'bg-[#fdfda0]'
                            : t.selected
                              ? isWeekend(i)
                                ? 'bg-[#c9dfac]'
                                : 'bg-[#b7e37e]'
                              : isWeekend(i) || t.group
                                ? 'bg-[#e7e7e7]'
                                : 'bg-white'
                        )}
                      />
                    ))}
                  </div>
                ))}
              </div>
              <Bars1197 />
              {barLabels.map((l) => (
                <span
                  key={l.y}
                  className="absolute text-[10px] leading-[12px] whitespace-nowrap text-[#222]"
                  style={{ left: l.x, top: l.y }}
                >
                  <b>{l.bold}</b>
                  {l.rest}
                </span>
              ))}
            </div>
          </div>
        </div>
        <div className="flex pt-[45px]">
          <VScroll lead="h-[70px]" thumb="h-[67px]" />
        </div>
      </div>
      <div className="flex flex-1 items-center bg-[#f0f0f0] pl-1">
        <Tri dir="left" className="text-[#999]" />
        <Tri dir="right" className="mr-1 ml-auto text-[#999]" />
        <span className="h-full w-[17px] bg-[#dedede]" />
      </div>
    </div>
  );
}

/* ---------- activity detail ---------- */

function DateIcon({ date, edit }) {
  return (
    <span className="relative flex h-[31px] w-8 flex-col items-center rounded-[3px] border-2 border-t-8 border-[#7886a0] border-t-[#34425a] bg-[#e9edf5] text-[9px] leading-[10px] text-[#333]">
      <span>{date}</span>
      <span>2019</span>
      {edit && <Icon name="pencil" className="absolute -top-2 -right-0.5 size-3" />}
    </span>
  );
}

const actions = [
  ['newDoc', 'New'],
  ['disk', 'Save'],
  ['printer', 'Print'],
  ['pdf', 'Export to PDF'],
  ['copy', 'Copy'],
  ['refresh', 'Refresh'],
  ['cross', 'Delete'],
  ['mail', 'Send mail'],
  ['rss', 'Subscribe'],
  ['outdent', 'Outdent'],
  ['indent', 'Indent'],
];

function ActivityHeader() {
  return (
    <div className="flex h-[35px] shrink-0 items-center bg-linear-to-b from-[#dcdcdc] to-[#cecece] pl-1.5">
      <Icon name="pc" className="size-[29px]" />
      <h2 className="ml-[13px] flex-1 text-lg font-bold whitespace-nowrap text-[#444]">
        Activity<span className="mx-[10px] text-white">#25</span>- scrittura documentazione
      </h2>
      <span className="flex h-[22px] w-[118px] items-center justify-center rounded-[8px] border border-[#b87a50] bg-[#d2691e] text-[11px] text-[#3a2a1c]">
        in progress
      </span>
      <span className="ml-[7px] flex gap-[7px]">
        <DateIcon date="06/06" edit />
        <DateIcon date="02/06" />
      </span>
      <span className="ml-1 flex size-[30px] items-center justify-center rounded-full bg-[#2ecc71] text-2xl text-white">A</span>
      <div className="ml-[67px] flex gap-1">
        {actions.map(([icon, title]) => (
          <ToolButton key={icon} icon={icon} title={title} className="h-[29px] w-8" size="size-[23px]" />
        ))}
      </div>
      <button type="button" className="mr-[164px] ml-3 h-7 w-[104px] rounded-[6px] border border-[#b5b5b5] bg-[#f0f0f0] text-center text-[10px] leading-[11px] text-[#555] outline-2 outline-[#f0f0f0]">
        Attachment
        <br />
        <span className="text-[9px] leading-[10px] italic text-[#777]">(drop files here)</span>
      </button>
    </div>
  );
}

function Section({ title, count, closed }) {
  return (
    <h3 className="flex h-6 items-center rounded-[6px] border border-[#a8a8a8] border-b-[#f4f4f4] bg-linear-to-b from-[#d8d8d8] to-[#b9b9b9] pr-1 pl-[5px] text-xs font-bold text-[#333]">
      <Tri dir={closed ? 'right' : 'down'} className="mr-1 text-white" />
      {title}
      {count !== undefined && (
        <span className="mb-0.5 ml-auto flex h-4 w-[42px] items-center justify-center rounded-full border border-[#f4f4f4] bg-[#d0d0d0] text-[11px] shadow-[1px_2px_2px_#555]">
          {count}
        </span>
      )}
    </h3>
  );
}

function Row({ label, htmlFor, mark, width = 'w-[140px]', children }) {
  return (
    <div className="flex h-[23px] items-center text-xs">
      <label htmlFor={htmlFor} className={clsx('mr-[7px] shrink-0 text-right whitespace-nowrap text-[#57577f]', width)}>
        {label}
        {!mark && ' :'}
      </label>
      {mark}
      {children}
    </div>
  );
}

const LinkIcons = () => (
  <span className="flex shrink-0 gap-[9px]">
    <button type="button" title="Search">
      <Icon name="lens" className="size-[17px]" />
    </button>
    <button type="button" title="Go to">
      <Icon name="goto" className="size-[15px]" />
    </button>
  </span>
);

function AlignIcon({ rows }) {
  return (
    <svg viewBox="0 0 12 12" className="size-3">
      {rows.map(([x, w], i) => (
        <rect key={i} x={x} y={i * 3} width={w} height="2" fill="#444" />
      ))}
    </svg>
  );
}

// dashed guide with an arrow on its left and short lines on its right
const IndentIcon = () => (
  <svg viewBox="0 0 15 13" className="h-[13px] w-[15px]" fill="none" stroke="currentColor">
    <path d="M7.500 0v13" strokeDasharray="1.500 1" strokeWidth="1.500" />
    <path d="M10 1.500h4M10 4.500h4M10 7.500h4M10 10.500h4M0 6.500h5" strokeWidth="1.500" />
    <path d="M3 4l3 2.500L3 9z" fill="currentColor" stroke="none" />
  </svg>
);

const MaximizeIcon = () => (
  <svg viewBox="0 0 16 16" className="size-4" fill="currentColor">
    <path d="M1 1h5L4.500 2.500l3 3-2 2-3-3L1 6zM15 1h-5l1.500 1.500-3 3 2 2 3-3L15 6zM1 15h5l-1.500-1.500 3-3-2-2-3 3L1 10zM15 15h-5l1.500-1.500-3-3 2-2 3 3L15 10z" />
  </svg>
);

const Sep = () => <span className="mx-[2px] h-5 w-px bg-[#c4c4c4]" />;

const Cell = ({ title, dim, wide, children }) => (
  <button
    type="button"
    title={title}
    className={clsx('flex h-[30px] items-center justify-center gap-1', wide ? 'w-[35px]' : 'w-7', dim ? 'text-[#bbb]' : 'text-[#444]')}
  >
    {children}
  </button>
);

const SmallTri = () => (
  <svg viewBox="0 0 6 4" className="h-1 w-1.5">
    <path d="M0 0h6L3 3.500z" fill="#444" />
  </svg>
);

function Editor({ label }) {
  return (
    <>
      <div className="flex h-3 items-center text-xs text-[#57577f]">{label}</div>
      <div className="h-[149px] border border-[#cbcbcb] bg-[#f8f8f8] font-['Liberation_Sans',sans-serif]">
        <div className="h-[74px] overflow-hidden pt-[5px] pl-2">
          <div className="flex items-center">
            <Cell title="Bold"><b className="text-base">B</b></Cell>
            <Cell title="Italic"><b className="font-['Liberation_Serif',serif] text-base italic">I</b></Cell>
            <Cell title="Underline"><b className="text-[15px] underline">U</b></Cell>
            <Sep />
            <Cell title="Remove format">
              <span className="flex items-end">
                <b className="text-[15px] leading-4 italic underline">T</b>
                <b className="text-[10px] leading-[10px]">x</b>
              </span>
            </Cell>
            <Sep />
            <Cell title="Indent"><IndentIcon /></Cell>
            <Cell title="Outdent" dim><IndentIcon /></Cell>
            <Sep />
            <Cell title="Left"><AlignIcon rows={[[0, 7], [0, 11], [0, 7], [0, 12]]} /></Cell>
            <Cell title="Center"><AlignIcon rows={[[1, 10], [3, 6], [1, 10], [0, 12]]} /></Cell>
            <Cell title="Right"><AlignIcon rows={[[2, 10], [5, 7], [2, 10], [0, 12]]} /></Cell>
            <Cell title="Justify"><AlignIcon rows={[[0, 12], [0, 12], [0, 12], [0, 12]]} /></Cell>
            <Sep />
            <Cell title="Numbered list"><MdFormatListNumbered size={16} /></Cell>
            <Cell title="Bulleted list"><MdFormatListBulleted size={16} /></Cell>
            <Sep />
            <Cell title="Text color" wide>
              <b className="border-b-2 border-[#999] px-px text-sm leading-[14px]">A</b>
              <SmallTri />
            </Cell>
            <Cell title="Background color" wide>
              <b className="rounded-[2px] bg-[#444] px-[2px] text-[13px] leading-[14px] text-white">A</b>
              <SmallTri />
            </Cell>
            <Sep />
            <Cell title="Print"><MdPrint size={16} /></Cell>
            <Cell title="Maximize"><MaximizeIcon /></Cell>
            <Sep />
          </div>
          <div className="mt-[3px] flex items-center text-xs text-[#444]">
            <button type="button" className="flex h-[30px] w-[60px] items-center gap-2.5 pl-[11px]">
              Font <SmallTri />
            </button>
            <Sep />
            <button type="button" className="flex h-[30px] w-[54px] items-center gap-2.5 pl-[7px]">
              Size <SmallTri />
            </button>
            <Sep />
            <Cell title="Link"><MdLink size={17} /></Cell>
            <Cell title="Unlink" dim><MdLinkOff size={17} /></Cell>
            <Cell title="Image"><MdImage size={18} /></Cell>
            <Cell title="Table"><MdGridOn size={16} /></Cell>
            <Cell title="Special character"><b className="text-base">Ω</b></Cell>
            <Cell title="Paste from Word"><MdOutlineContentPaste size={16} /></Cell>
            <Cell title="Source"><RiFileCodeLine size={15} /></Cell>
          </div>
        </div>
        <div className="flex h-12 border-y border-[#cbcbcb] bg-white">
          <textarea aria-label={label} className="min-w-0 flex-1 resize-none outline-none" />
          <VScroll thumb="h-3" />
        </div>
        <div className="flex h-[25px] items-end justify-end p-1">
          <svg viewBox="0 0 10 10" className="size-2.5">
            <path d="M10 0v10H0z" fill="#b5b5b5" />
          </svg>
        </div>
      </div>
    </>
  );
}

function Description() {
  const id = useId();
  return (
    <section>
      <Section title="Description" />
      <div className="relative pt-1.5">
        <svg viewBox="0 0 32 32" className="absolute top-1 left-1 size-8" aria-hidden="true">
          <circle cx="16" cy="16" r="16" fill="#ffa3a3" />
          <path d="M13 6h6l-1.500 12h-3z" fill="#fff" />
          <circle cx="16" cy="23.500" r="2.500" fill="#fff" />
        </svg>
        <Row label="id">
          <span className="w-[107px] px-1.5 text-[#666]"># &nbsp;25</span>
          <span className="text-[#666]">-TAS-14</span>
        </Row>
        <Row label="name" htmlFor={`${id}n`}>
          <Input id={`${id}n`} value="scrittura documentazione" required className="mr-[5px] flex-1" />
        </Row>
        <Row label="activity type" htmlFor={`${id}t`}>
          <Combo id={`${id}t`} value="Task" required className="mr-2 flex-1" />
          <LinkIcons />
          <span className="w-1.5" />
        </Row>
        <Row label="project" htmlFor={`${id}p`}>
          <Combo id={`${id}p`} value="Progetto APP Cliente 2" required className="mr-2 flex-1" />
          <LinkIcons />
          <span className="w-1.5" />
        </Row>
        <Row label="external reference" htmlFor={`${id}e`}>
          <Input id={`${id}e`} className="mr-1.5 flex-1" />
        </Row>
        <Row label="requestor" htmlFor={`${id}r`}>
          <Combo id={`${id}r`} className="mr-2.5 flex-1" />
          <LinkIcons />
          <span className="w-1.5" />
        </Row>
        <Row label="origin">
          <button type="button" title="Add origin">
            <Icon name="plus" className="size-[17px]" />
          </button>
        </Row>
        <Editor label="description" />
      </div>
    </section>
  );
}

function Treatment() {
  const id = useId();
  return (
    <section>
      <Section title="Treatment" />
      <div className="pt-1.5">
        <Row label="parent activity" htmlFor={`${id}p`}>
          <Combo id={`${id}p`} value="implementazione" className="mr-2.5 flex-1" />
          <LinkIcons />
          <span className="w-1.5" />
        </Row>
        <Row
          label="status"
          htmlFor={`${id}s`}
          width="w-[116px]"
          mark={<span className="mr-0.5 ml-0.5 size-5 shrink-0 rounded-full border border-[#b87a50] bg-[#d2691e]" />}
        >
          <Combo id={`${id}s`} value="in progress" required className="w-[158px]" />
          <button type="button" className="mr-3 ml-2 flex h-[21px] min-w-0 flex-1 items-center gap-1 rounded-full border border-[#b5b5b5] bg-linear-to-b from-white to-[#e6e6e6] pl-1 text-[#222]">
            <RiLoginBoxLine size={18} className="text-[#444]" />
            done
          </button>
          <LinkIcons />
          <span className="w-1.5" />
        </Row>
        <Row
          label="responsible"
          htmlFor={`${id}r`}
          width="w-[116px]"
          mark={<span className="mr-0.5 ml-0.5 flex size-5 shrink-0 items-center justify-center rounded-full bg-[#1abc9c] text-sm text-white">A</span>}
        >
          <Combo id={`${id}r`} value="analistaprogrammatore" required className="mr-2 flex-1" />
          <LinkIcons />
          <span className="w-1.5" />
        </Row>
        <Row label="handled" htmlFor={`${id}h`}>
          <Tick id={`${id}h`} checked gray bordered />
          <Input label="handled date" value="20/06/2019" className="ml-0.5 w-[74px]" />
        </Row>
        <Row label="done" htmlFor={`${id}d`}>
          <Tick id={`${id}d`} bordered />
          <Input label="done date" className="ml-0.5 w-[74px]" />
        </Row>
        <Row label="closed" htmlFor={`${id}c`}>
          <Tick id={`${id}c`} bordered />
          <Input label="closed date" className="mr-3 ml-0.5 w-[74px]" />
          <Tick id={`${id}x`} bordered />
          <label htmlFor={`${id}x`} className="ml-[3px] text-[#57577f]">
            cancelled
          </label>
        </Row>
        <Editor label="result" />
      </div>
    </section>
  );
}

const th = 'h-[21px] border border-[#a8a8a8] bg-linear-to-b from-white to-[#ececec] font-normal text-[#555]';
const td = 'border border-[#a8a8a8] bg-white text-[11px] leading-[14px] text-black';

const AddHead = () => (
  <th className={th}>
    <button type="button" title="Add" className="block w-full">
      <Icon name="plus" className="mx-auto size-[17px]" />
    </button>
  </th>
);

function Assignment() {
  const rows = [
    { name: ['tester (Expert)'], assigned: '80', real: '8,00', left: '80', height: 'h-7' },
    { name: ['analistaprogrammatore', '(Analyst)'], assigned: '20', real: '0,00', left: '20', height: 'h-[29px]', removable: true },
  ];
  return (
    <table className="mt-1.5 w-full table-fixed border-collapse text-xs">
      <colgroup>
        <col className="w-[72px]" />
        <col />
        <col className="w-[74px]" />
        <col className="w-[76px]" />
        <col className="w-[75px]" />
        <col className="w-[74px]" />
      </colgroup>
      <thead>
        <tr>
          <AddHead />
          <th className={th}>resource</th>
          <th className={th}>rate</th>
          <th className={th}>assigned (h)</th>
          <th className={th}>real (h)</th>
          <th className={th}>left (h)</th>
        </tr>
      </thead>
      <tbody>
        {rows.map((r) => (
          <tr key={r.left} className={r.height}>
            <td className={td}>
              <div className="flex items-center justify-center gap-[5px]">
                <Icon name="pencil" className="size-4" />
                {r.removable && <Icon name="cross" className="size-4" />}
                <Icon name="share" className="size-[15px]" />
              </div>
            </td>
            <td className={clsx(td, 'px-[5px]')}>
              {r.name.map((n) => (
                <div key={n} className="leading-[12px]">
                  {n}
                </div>
              ))}
            </td>
            <td className={clsx(td, 'text-center')}>100 %</td>
            <td className={clsx(td, 'px-[5px]')}>
              <Input label="assigned" value={r.assigned} right className="block w-full text-[11px]!" />
            </td>
            <td className={clsx(td, 'px-[5px] text-right')}>{r.real}</td>
            <td className={clsx(td, 'px-[5px]')}>
              <Input label="left" value={r.left} right className="block w-full text-[11px]!" />
            </td>
          </tr>
        ))}
      </tbody>
    </table>
  );
}

const SubTitle = ({ children, className }) => (
  <h4 className={clsx('flex h-[22px] items-center justify-center border-y border-l border-[#888] bg-linear-to-b from-white to-[#ececec] text-xs text-[#555]', className)}>
    {children}
  </h4>
);

const Heads = ({ names, cols }) => (
  <div className={clsx('ml-[78px] grid h-[13px] items-center text-xs font-bold text-[#57577f]', cols)}>
    {names.map((n, i) => (
      <span key={i}>{n}</span>
    ))}
  </div>
);

const dateCols = 'grid-cols-[76px_76px_76px_75px_1fr]';
const workCols = 'grid-cols-[89px_89px_89px_89px_1fr]';

const Unit = ({ label, value, readOnly, unit }) => (
  <span className="flex items-center text-xs text-[#222]">
    <Input label={label} value={value} readOnly={readOnly} right className="mr-px w-[62px]" />
    {unit}
  </span>
);

const Cost = ({ label, readOnly }) => (
  <span className="flex items-center pl-[3px] text-xs text-[#222]">
    €
    <Input label={label} readOnly={readOnly} className="ml-px w-[76px]" />
  </span>
);

function Progress() {
  const id = useId();
  return (
    <>
      <SubTitle className="mt-3">Dates and durations</SubTitle>
      <Heads cols={dateCols} names={['validated', 'planned', 'real', '', 'requested']} />
      <Row label="start date" width="w-[72px]">
        <div className={clsx('grid flex-1', dateCols)}>
          <Input label="validated start" value="27/06/2019" className="w-[73px]" />
          <Input label="planned start" value="10/06/2019" readOnly className="w-[73px]" />
          <Input label="real start" value="10/06/2019" readOnly className="w-[73px]" />
          <span />
          <Input label="requested start" className="w-[74px]" />
        </div>
      </Row>
      <Row label="end date" width="w-[72px]">
        <div className={clsx('grid flex-1', dateCols)}>
          <Input label="validated end" value="10/07/2019" className="w-[73px]" />
          <Input label="planned end" value="10/06/2019" readOnly className="w-[73px]" />
          <Input label="real end" readOnly className="w-[73px]" />
          <span />
          <Input label="requested end" className="w-[74px]" />
        </div>
      </Row>
      <Row label="duration" width="w-[72px]">
        <div className={clsx('grid flex-1', dateCols)}>
          <Unit label="validated duration" value="10" unit="d" />
          <Unit label="planned duration" value="1" readOnly unit="d" />
          <Unit label="real duration" readOnly unit="d" />
          <span />
          <Unit label="requested duration" value="0" unit="d" />
        </div>
      </Row>
      <SubTitle className="mt-[7px]">Costs and works</SubTitle>
      <Heads cols={workCols} names={['validated', 'assigned', 'real', 'left', 'reassessed']} />
      <Row label="work" width="w-[72px]">
        <div className={clsx('grid flex-1', workCols)}>
          <Unit label="validated work" value="80" unit="h" />
          <Unit label="assigned work" value="100" readOnly unit="h" />
          <Unit label="real work" value="8" readOnly unit="h" />
          <Unit label="left work" value="100" readOnly unit="h" />
          <Unit label="reassessed work" value="108" readOnly unit="h" />
        </div>
      </Row>
      <Row label="cost" width="w-[72px]">
        <div className={clsx('grid flex-1', workCols)}>
          <Cost label="validated cost" />
          <Cost label="assigned cost" readOnly />
          <Cost label="real cost" readOnly />
          <Cost label="left cost" readOnly />
          <Cost label="reassessed cost" readOnly />
        </div>
      </Row>
      <SubTitle className="mt-[7px]">Steering</SubTitle>
      <div className="mt-px flex">
        <Row label="progress" width="w-[72px]">
          <span className="w-[80px] text-[#222]">7 %</span>
        </Row>
        <Row label="expected" width="w-[64px]">
          <span className="w-[80px] text-[#222]">10 %</span>
        </Row>
        <Row label="wbs" width="w-[64px]">
          <span className="text-[#222]">3.2.4</span>
        </Row>
      </div>
      <div className="mb-[9px] flex">
        <Row label="priority" htmlFor={`${id}p`} width="w-[72px]">
          <span className="w-[80px]">
            <Input id={`${id}p`} value="500" right className="w-[46px]" />
          </span>
        </Row>
        <Row label="planning" htmlFor={`${id}m`} width="w-[64px]">
          <Combo id={`${id}m`} value="as soon as possible" required className="w-[200px]" />
        </Row>
      </div>
    </>
  );
}

function Predecessors() {
  return (
    <section className="pt-[5px]">
      <Section title="Predecessor element" count={1} />
      <table className="mt-[5px] w-full table-fixed border-collapse text-xs">
        <colgroup>
          <col className="w-[53px]" />
          <col className="w-[106px]" />
          <col />
          <col className="w-[78px]" />
          <col className="w-[78px]" />
        </colgroup>
        <thead>
          <tr>
            <AddHead />
            <th className={th}>element</th>
            <th className={th}>name</th>
            <th className={th}>status</th>
            <th className={th}>end date</th>
          </tr>
        </thead>
        <tbody>
          <tr className="h-[27px]">
            <td className={td}>
              <div className="flex justify-center gap-1">
                <Icon name="pencil" className="size-[17px]" />
                <Icon name="cross" className="size-[17px]" />
              </div>
            </td>
            <td className={clsx(td, 'px-[5px]')}>
              <div className="flex items-center gap-1">
                <Icon name="pc" className="size-[15px]" />
                Activity #24
              </div>
            </td>
            <td className={clsx(td, 'px-[5px] align-top')}>
              <div className="flex items-center pt-px">
                scrittura codice
                <span className="mr-1 ml-auto border border-[#aaa] bg-[#fffbe0] px-1 leading-[13px] text-[#555]">1 d</span>
                <Icon name="pred" className="size-4" />
              </div>
            </td>
            <td className={td}>
              <div className="mx-auto flex h-[23px] w-[66px] items-center justify-center rounded-[10px] border border-[#b87a50] bg-[#d2691e] text-[#3a1c08]">
                in progress
              </div>
            </td>
            <td className={clsx(td, 'pt-px text-center align-top')}>12/07/2019</td>
          </tr>
        </tbody>
      </table>
    </section>
  );
}

function Successors() {
  return (
    <section className="pt-[5px]">
      <Section title="Successor element" count={0} />
      <table className="mt-[5px] w-full table-fixed border-collapse text-xs">
        <colgroup>
          <col className="w-[61px]" />
          <col className="w-[123px]" />
          <col />
          <col className="w-[93px]" />
        </colgroup>
        <thead>
          <tr>
            <AddHead />
            <th className={th}>element</th>
            <th className={th}>name</th>
            <th className={th}>status</th>
          </tr>
        </thead>
      </table>
    </section>
  );
}

function Detail() {
  return (
    <div className="relative flex min-h-0 flex-1 bg-[#ececec]">
      <div className="mr-3 grid min-w-0 flex-1 grid-cols-3 grid-rows-[auto_1fr] content-start gap-x-[5px] overflow-hidden pt-1.5 pl-1.5">
        <Description />
        <Treatment />
        <section className="row-span-2">
          <Section title="Assignment" count={2} />
          <Assignment />
          <div className="mt-1">
            <Section title="Progress" />
          </div>
          <Progress />
          <Section title="Product | Component | Version" closed />
          <div className="mt-1">
            <Section title="Linked Elements" count={0} />
          </div>
          <table className="mt-[5px] mb-1 w-full table-fixed border-collapse text-xs">
            <colgroup>
              <col className="w-[28px]" />
              <col className="w-[78px]" />
              <col />
              <col className="w-[78px]" />
              <col className="w-[52px]" />
            </colgroup>
            <thead>
              <tr>
                <AddHead />
                <th className={th}>element</th>
                <th className={th}>name</th>
                <th className={th}>status</th>
                <th className={th}>resp.</th>
              </tr>
            </thead>
          </table>
          <Section title="Attachments" count={0} closed />
        </section>
        <Predecessors />
        <Successors />
      </div>
      <VScroll thumb="h-[431px]" />
      <button type="button" title="Show menu" className="absolute bottom-0.5 -left-[3px] flex flex-col gap-[3px]">
        <Bars />
      </button>
      <button type="button" title="Show list" className="absolute right-0 bottom-0.5 flex flex-col gap-[3px]">
        <Bars />
      </button>
    </div>
  );
}

/* ---------- frame ---------- */

const VSplit = () => (
  <div className="flex w-1.5 shrink-0 items-center justify-center border-x border-[#a0a0a0] bg-[#dcdcdc]">
    <span className="h-5 border-l-2 border-dotted border-white" />
  </div>
);

const marks = [
  'top-[248px] left-[672px] h-[68px] w-[128px]',
  'top-[460px] left-[285px] h-[68px] w-[71px]',
  'top-[485px] left-[1737px] h-[48px] w-[82px]',
  'top-[614px] left-[1494px] h-[99px] w-[81px]',
];

const tray = [
  '#ffffff', '#dddddd', '#cccccc', '#eeeeee', '#f0a020', '#2c8be0', '#bbbbbb', '#e03040', '#999999', '#30a0e0',
  '#ffffff', '#e04050', '#f0c020', '#cccccc', '#16203c', '#3a7be0', '#f0f0f0', '#20b0d0', '#c01020', '#e06020',
  '#f0b020', '#eeeeee', '#e0c070', '#c8d4e8', '#90e040', '#16203c', '#d02030', '#40c060', '#20a060', '#e04030',
  '#dddddd', '#f08020', '#cccccc', '#3a8be0', '#b020c0', '#9cc0e0', '#777777', '#888888', '#60c040', '#d02030',
  '#c02080', '#e0c040', '#4a90e0', '#f0d020', '#8890b0', '#eeeeee', '#e0a030', '#cccccc', '#f0a020', '#ffffff',
  '#8090a0', '#40a0e0', '#607890', '#30a0e0', '#4a90e0', '#80c040',
];

function App() {
  return (
    <div className="relative flex h-screen flex-col overflow-hidden bg-[#e0e0e0] font-['DejaVu_Sans_Condensed','DejaVu_Sans',sans-serif] text-xs">
      <TopBar />
      <ShortcutBar />
      <div className="flex min-h-0 flex-1">
        <SideBar />
        <VSplit />
        <main className="flex min-w-0 flex-1 flex-col">
          <PlanningHeader />
          <div className="flex h-[252px] shrink-0 bg-[#ececec]">
            <TaskList />
            <span className="w-[5px] shrink-0 border-x-2 border-[#a8a8a8] bg-[#e4e4e4]" />
            <GanttChart />
          </div>
          <div className="flex h-1.5 shrink-0 justify-center border-y border-[#999] bg-[#dcdcdc]">
            <span className="w-5 border-t-2 border-dotted border-white" />
          </div>
          <ActivityHeader />
          <Detail />
        </main>
        <VSplit />
        <div className="flex w-2.5 shrink-0 flex-col justify-between bg-[#ececec]">
          <span className="flex h-14 flex-col items-end justify-around bg-[#e2e2e2]">
            <Tri dir="up" className="text-[#333]" />
            <Tri dir="left" className="text-[#888]" />
          </span>
          <span className="flex h-[68px] flex-col items-end justify-around border-t border-l border-[#999] bg-[#f0f0f0]">
            <Tri dir="up" className="text-[#888]" />
            <span className="h-3 w-2 bg-[#c1c1c1]" />
            <Tri className="text-[#444]" />
          </span>
        </div>
      </div>
      <footer className="flex h-[9px] shrink-0 items-end justify-between overflow-hidden bg-[#16203c] px-2.5">
        {tray.map((color, i) => (
          <svg key={i} viewBox="0 0 14 3" className="h-[3px] w-3.5">
            {i % 3 ? <ellipse cx="7" cy="4" rx="4" ry="3" fill={color} /> : <rect x="2" y="1" width="10" height="3" fill={color} />}
          </svg>
        ))}
      </footer>
      {marks.map((m) => (
        <div key={m} className={clsx('pointer-events-none absolute rounded-[3px] border-[7px] border-[#ff0000]', m)} />
      ))}
    </div>
  );
}

export default App;
